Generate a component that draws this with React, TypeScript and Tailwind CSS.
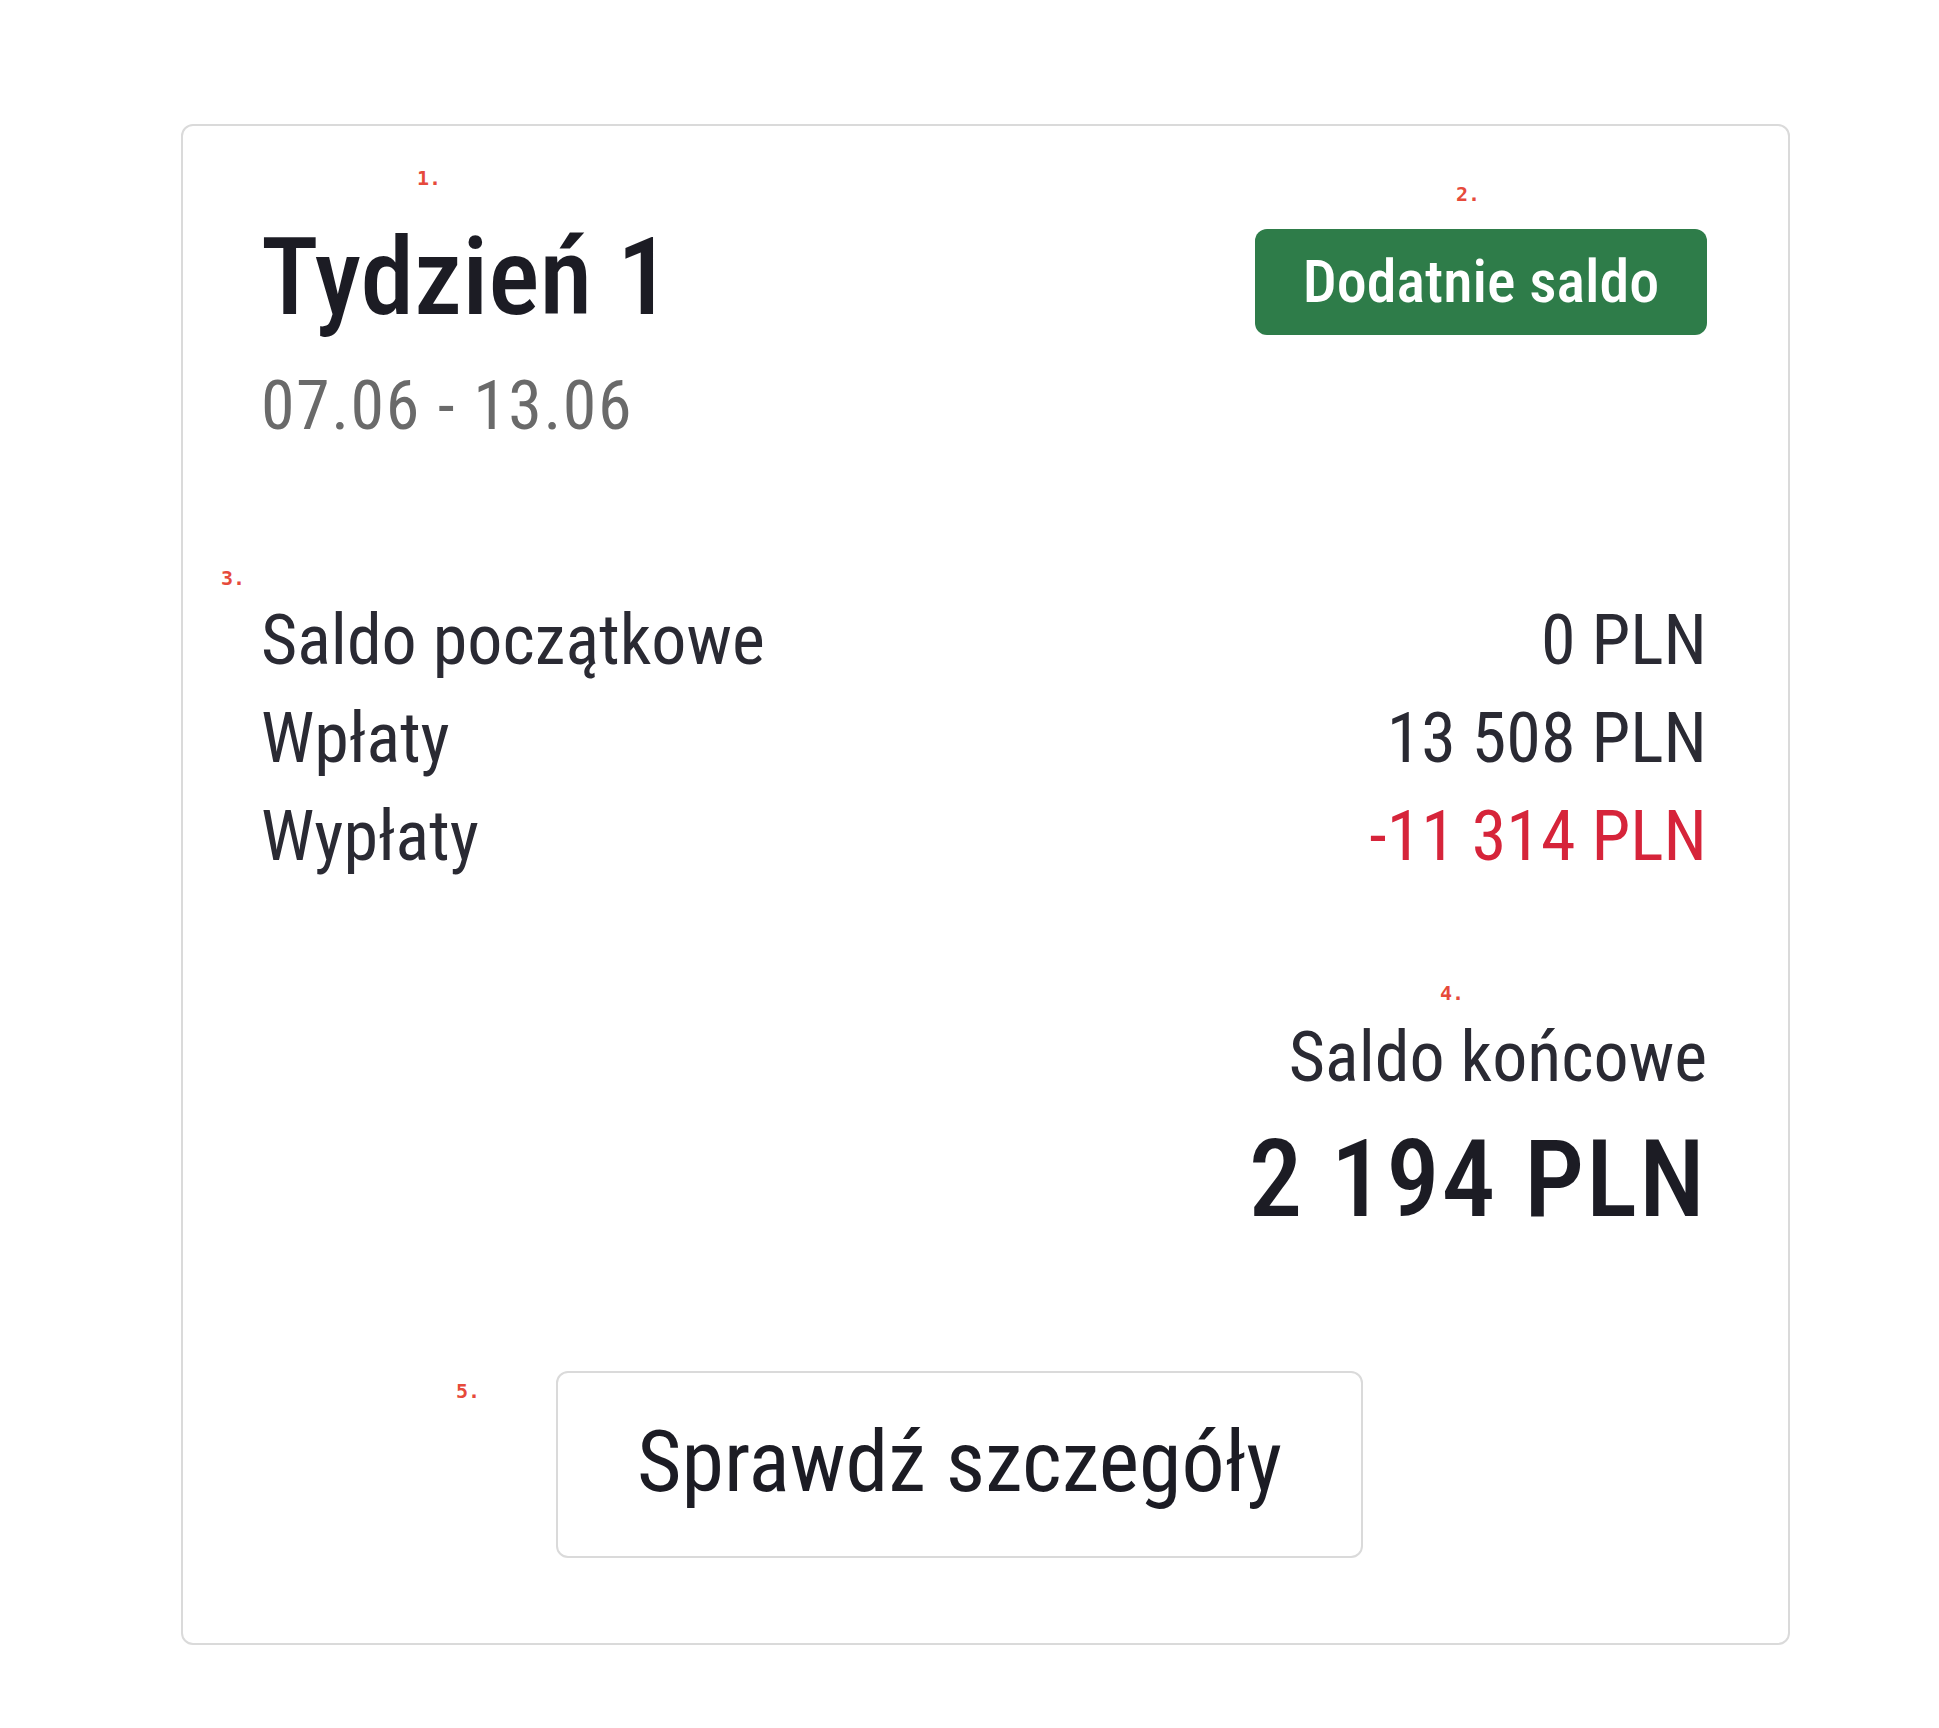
const font = { fontFamily: "'Roboto Condensed', Roboto, 'Liberation Sans', sans-serif" };

interface Row {
  label: string;
  value: string;
  negative?: boolean;
}

const rows: Row[] = [
  { label: 'Saldo początkowe', value: '0 PLN' },
  { label: 'Wpłaty', value: '13 508 PLN' },
  { label: 'Wypłaty', value: '-11 314 PLN', negative: true },
];

const markers = [
  { n: '1.', cls: 'left-[417px] top-[168px]' },
  { n: '2.', cls: 'left-[1456px] top-[184px]' },
  { n: '3.', cls: 'left-[221px] top-[568px]' },
  { n: '4.', cls: 'left-[1440px] top-[983px]' },
  { n: '5.', cls: 'left-[456px] top-[1381px]' },
];

export default function App() {
  return (
    <div className="relative min-h-[1728px] bg-white pt-[124px] pl-[181px]" style={font}>
      <div className="w-[1609px] rounded-[12px] border-2 border-[#dadada] pl-[78px] pr-[81px] pt-[97px] pb-[85px]">
        <div className="flex items-start justify-between">
          <div>
            <h2 className="text-[108px] font-medium leading-none text-[#1c1c24]">Tydzień 1</h2>
            <p className="mt-[41px] text-[68px] leading-none tracking-[1.5px] text-[#6a6a6a]">07.06 - 13.06</p>
          </div>
          <div className="mt-[6px] flex h-[106px] w-[452px] items-center justify-center rounded-[12px] bg-[#2e7c49] text-[60px] font-medium leading-none text-white">
            Dodatnie saldo
          </div>
        </div>

        <div className="mt-[151px]">
          {rows.map((r) => (
            <div key={r.label} className="flex items-baseline justify-between text-[70px] leading-[98px]">
              <span className="text-[#2a2a33]">{r.label}</span>
              <span className={r.negative ? 'text-[#d6243a]' : 'text-[#2a2a33]'}>{r.value}</span>
            </div>
          ))}
        </div>

        <div className="mt-[137px] flex flex-col items-end">
          <p className="text-[70px] leading-none text-[#2a2a33]">Saldo końcowe</p>
          <p className="mt-[34px] text-[107px] font-medium leading-none tracking-[2px] text-[#1c1c24]">2 194 PLN</p>
        </div>

        <button className="ml-[295px] mt-[138px] flex h-[187px] w-[807px] items-center justify-center rounded-[12px] border-2 border-[#dadada] bg-white pb-[6px] text-[86px] leading-none text-[#1c1c24]">
          Sprawdź szczegóły
        </button>
      </div>

      {markers.map((m) => (
        <span
          key={m.n}
          className={`absolute ${m.cls} text-[20px] font-bold leading-none text-[#e64a3b]`}
          style={{ fontFamily: "'DejaVu Sans Mono', 'Liberation Mono', monospace" }}
        >
          {m.n}
        </span>
      ))}
    </div>
  );
}
